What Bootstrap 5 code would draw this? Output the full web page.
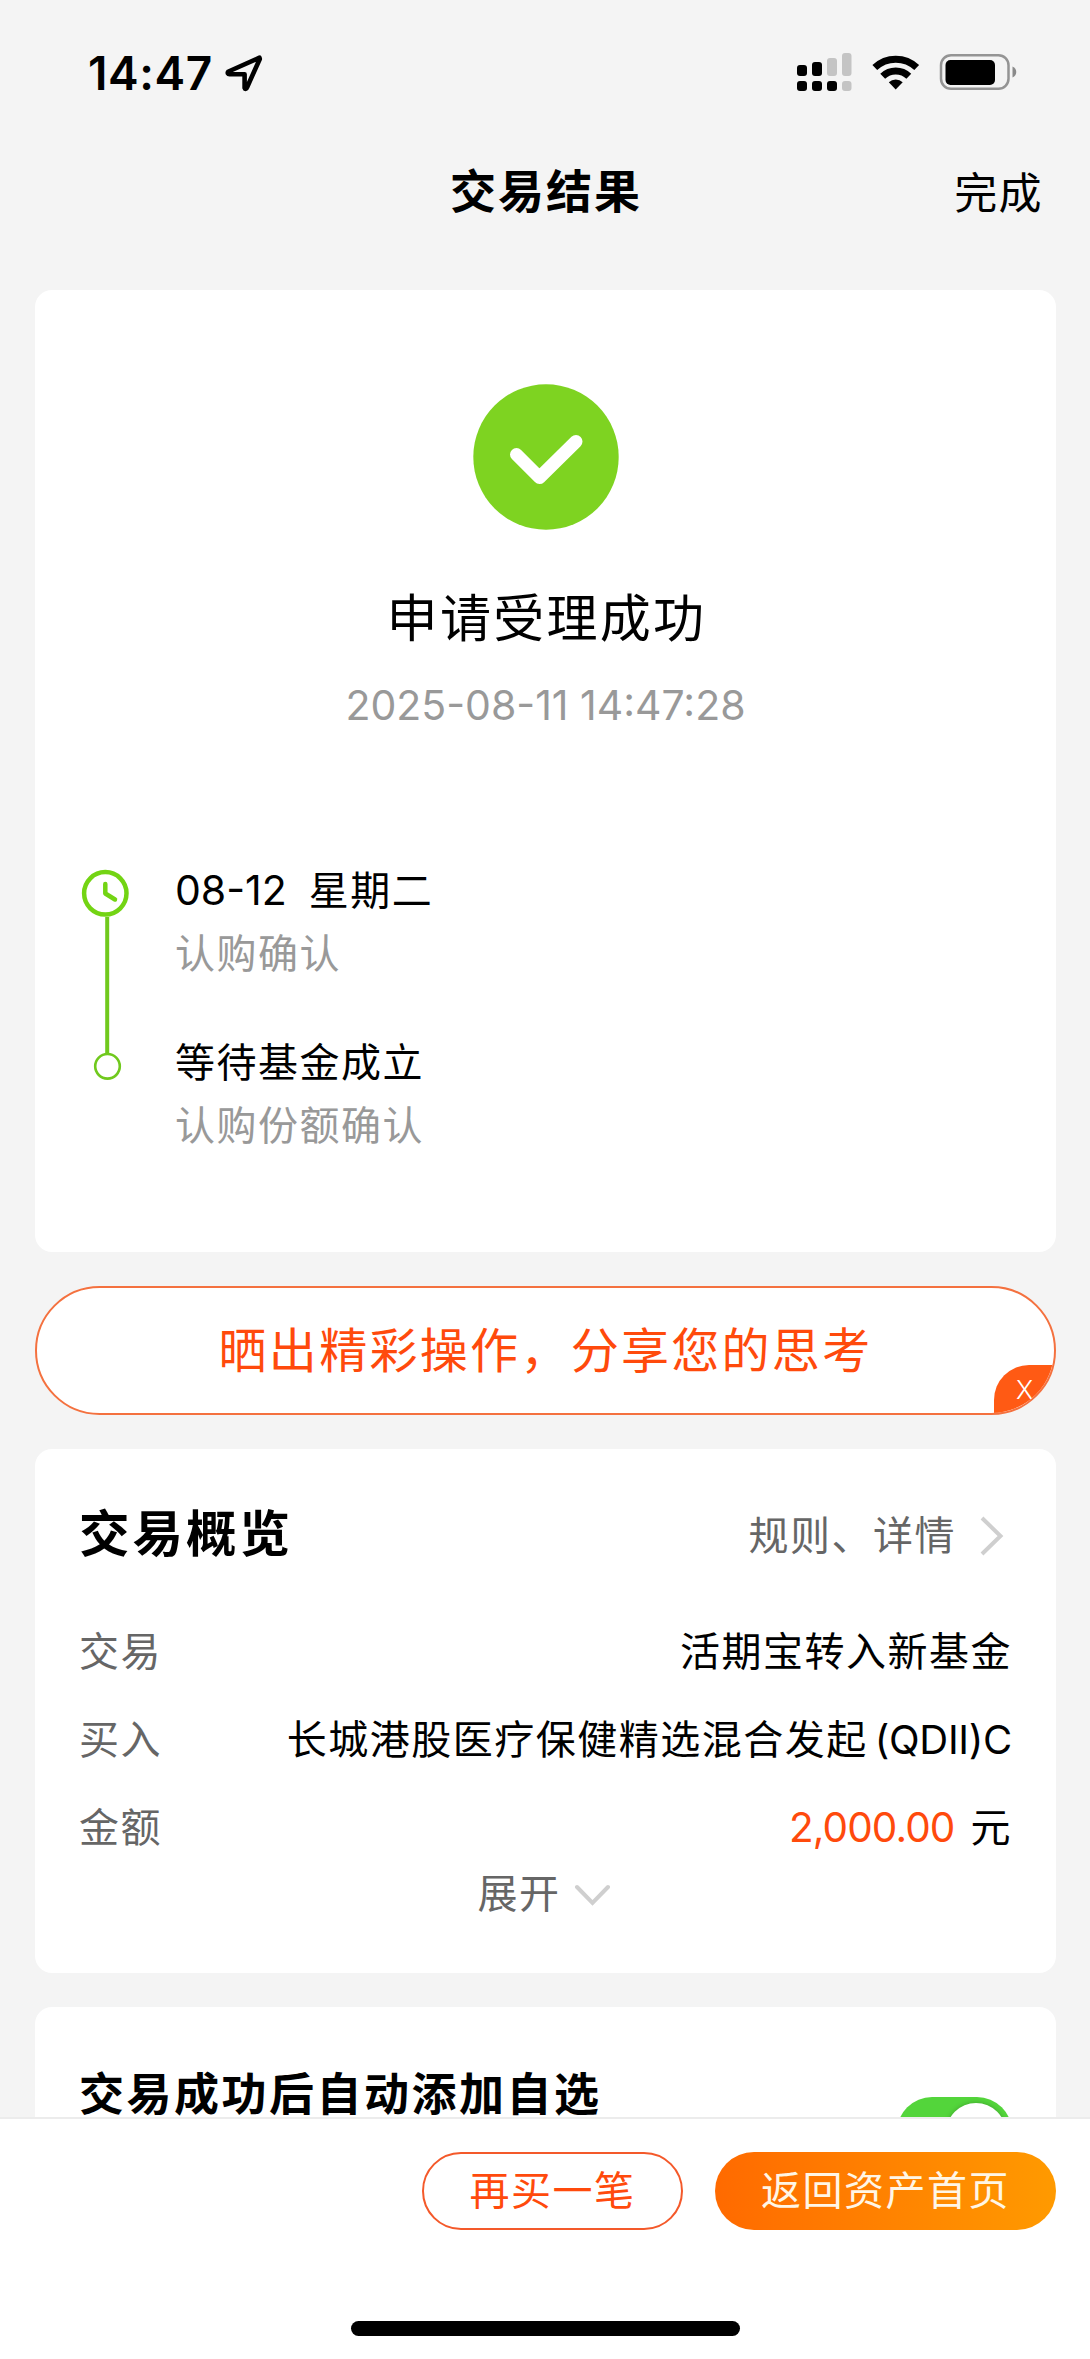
<!DOCTYPE html>
<html lang="zh-CN">
<head>
<meta charset="utf-8">
<meta name="viewport" content="width=device-width, initial-scale=1">
<title>交易结果</title>
<link href="https://cdn.jsdelivr.net/npm/bootstrap@5.3.0/dist/css/bootstrap.min.css" rel="stylesheet">
<style>
  body { font-family: Inter, "Noto Sans CJK SC", sans-serif; background: #f4f4f4; color: #000; height: 2359px; }
  .t40 { font-size: 40px; line-height: 50px; letter-spacing: 1.5px; white-space: nowrap; }
  .num { font-size: 41px; letter-spacing: 0; }
  .num-tight { font-size: 40.500px; letter-spacing: -.9px; }
  .num-fund { font-size: 40px; letter-spacing: -.3px; margin-left: 7px; }
  .weekday { margin-left: 22px; }
  .grey6 { color: #666; }
  .grey9 { color: #999; }
  .flame { color: #ff4a0c; }
  .statusbar { height: 145px; padding: 0 73px 0 88px; }
  .clock { font-size: 46px; line-height: 50px; font-weight: 600; letter-spacing: .6px; width: 123px; }
  .clock-arrow { margin-left: 14px; }
  .topnav { height: 91px; margin-bottom: 54px; padding-right: 47px; }
  .topnav h1 { font-size: 46px; line-height: 60px; font-weight: 600; letter-spacing: 2px; padding-left: 2px; }
  .done-link { font-size: 43px; line-height: 60px; letter-spacing: 1.4px; color: #000; padding-top: 4px; }
  .panel { margin: 0 34px 0 35px; border-radius: 17px; background: #fff; padding: 0 44px 0 44px; }
  .result { height: 962px; padding-top: 94px; }
  .result h2 { font-size: 51px; line-height: 60px; letter-spacing: 2.3px; font-weight: 400; margin: 59px 0 31px; padding-left: 2px; }
  .stamp { font-size: 41px; line-height: 50px; }
  .steps { margin-top: 135px; }
  .steps svg { margin-right: 43px; }
  .gap13 { margin-bottom: 13px; }
  .gap59 { margin-bottom: 59px; }
  .share { margin: 34px 34px 34px 35px; height: 129px; border: 2px solid #f4713f; background: #fff; font-size: 48px; letter-spacing: 2.300px; overflow: hidden; }
  .close-tag { right: -2px; bottom: -2px; width: 62px; height: 50px; border-radius: 35px 0 0 0; background: #ff5a14; color: #fff; font-size: 26px; font-weight: 300; line-height: 50px; padding-left: 22px; letter-spacing: 0; }
  .overview { height: 524px; padding-top: 55px; margin-bottom: 34px; }
  .overview h3 { font-size: 50.500px; line-height: 60px; letter-spacing: 3px; font-weight: 600; }
  .more-link { padding-top: 3px; }
  .rows { margin-top: 63px; gap: 38px; }
  .expand { margin-top: 16px; gap: 13px; padding-right: 4px; }
  .main-area { height: 2117px; overflow: hidden; }
  .auto-add { height: 200px; padding-top: 66px; }
  .auto-add h3 { font-size: 45px; line-height: 44px; letter-spacing: 2.500px; font-weight: 600; }
  .toggle { width: 115px; height: 70px; border-radius: 35px; background: #53d53b; margin-top: 24px; padding: 6px; }
  .knob { width: 60px; height: 60px; background: #fff; box-shadow: 0 0 5px rgba(0,0,0,.25); }
  .bottombar { height: 242px; border-top: 2px solid #ececec; padding: 33px 34px 0 0; background: #fff; }
  .pill { height: 78px; border: 0; padding: 0; }
  .pill-line { width: 261px; border: 2px solid #f4592a; color: #ff4a0c; background: #fff; }
  .pill-fill { width: 341px; background: linear-gradient(90deg, #ff6a00, #ff9a00); color: #fff6e6; }
  .home-bar { width: 389px; height: 15px; background: #000; margin: 91px 0 0 351px; }
</style>
</head>
<body class="overflow-hidden">
<div class="main-area">
  <header class="statusbar d-flex align-items-center justify-content-between">
    <div class="d-flex align-items-center">
      <span class="clock">14:47</span>
      <svg class="clock-arrow" width="38" height="38" viewBox="225 54 38 38" fill="none" stroke="#000" stroke-width="4.600" stroke-linejoin="round"><path d="M259.500 57.700 228.500 71.500C227 73 228 74.300 229.500 74.300H244.600V88C245 89.500 246.600 89 247 87.500L259.800 59Z"/></svg>
    </div>
    <svg width="221" height="40" viewBox="796 53 221 40">
      <g fill="#000">
        <rect x="797" y="65" width="10" height="11" rx="3"/><rect x="812" y="62" width="10" height="14" rx="3"/>
        <rect x="797" y="81" width="10" height="10" rx="3"/><rect x="812" y="81" width="10" height="10" rx="3"/><rect x="827" y="81" width="10" height="10" rx="3"/>
      </g>
      <g fill="#c4c4c4"><rect x="827" y="58" width="10" height="18" rx="3"/><rect x="842" y="53" width="9.500" height="23" rx="3"/><rect x="842" y="81" width="9.500" height="10" rx="3"/></g>
      <g fill="none" stroke="#000" stroke-width="7"><path d="M874.800 67.500A30.500 30.500 0 0 1 916.700 67.500"/><path d="M882.700 76.200A18.800 18.800 0 0 1 908.800 76.200"/></g>
      <path d="M888.800 82.300A10 10 0 0 1 902.700 82.300L895.700 89.500Z"/>
      <rect x="941" y="55.300" width="67.500" height="33.500" rx="10" fill="none" stroke="#949494" stroke-width="2.500"/>
      <rect x="945.500" y="60" width="49.500" height="25" rx="5"/>
      <path d="M1012.500 66.500C1017.500 68.500 1017.500 75.500 1012.500 77.500Z" fill="#8a8a8a"/>
    </svg>
  </header>
  <nav class="topnav position-relative d-flex align-items-center justify-content-end">
    <h1 class="position-absolute start-0 end-0 text-center mb-0">交易结果</h1>
    <a class="done-link text-decoration-none position-relative" href="#">完成</a>
  </nav>

  <section class="panel result">
    <div class="text-center">
      <svg class="d-block mx-auto" width="146" height="146" viewBox="0 0 146 146"><circle cx="73" cy="73" r="72.700" fill="#7ed321"/><path d="M43.500 70.500 66.500 93.500 103 57.500" fill="none" stroke="#fff" stroke-width="13" stroke-linecap="round" stroke-linejoin="round"/></svg>
      <h2>申请受理成功</h2>
      <div class="stamp grey9">2025-08-11 14:47:28</div>
    </div>
    <div class="steps d-flex">
      <svg width="53" height="220" viewBox="79 865 53 220" fill="none" stroke-linecap="round" stroke-linejoin="round">
        <circle cx="105.300" cy="893.300" r="21.200" stroke="#73d413" stroke-width="4.500"/>
        <path d="M105.300 884V893.500L115 899.500" stroke="#73d413" stroke-width="4.500"/>
        <path d="M107.200 917V1053" stroke="#70c91d" stroke-width="4" stroke-linecap="butt"/>
        <circle cx="107.500" cy="1066.300" r="12.300" stroke="#70c91d" stroke-width="2.600"/>
      </svg>
      <div class="t40">
        <div class="gap13"><span class="num">08-12</span><span class="weekday">星期二</span></div>
        <div class="gap59 grey9">认购确认</div>
        <div class="gap13">等待基金成立</div>
        <div class="grey9">认购份额确认</div>
      </div>
    </div>
  </section>

  <div class="share flame rounded-pill position-relative d-flex align-items-center justify-content-center">
    <span>晒出精彩操作，分享您的思考</span>
    <span class="close-tag position-absolute">X</span>
  </div>

  <section class="panel overview">
    <div class="d-flex justify-content-between align-items-center">
      <h3 class="mb-0">交易概览</h3>
      <a class="more-link t40 grey6 text-decoration-none d-flex align-items-center" href="#">规则、详情
        <svg class="ms-4 me-2" width="24" height="40" viewBox="0 0 24 40" fill="none" stroke="#cfcfcf" stroke-width="4"><path d="M2 2 20.500 20 2 38"/></svg></a>
    </div>
    <div class="rows t40 d-flex flex-column">
      <div class="d-flex justify-content-between"><span class="grey6">交易</span><span>活期宝转入新基金</span></div>
      <div class="d-flex justify-content-between"><span class="grey6">买入</span><span>长城港股医疗保健精选混合发起<span class="num-fund">(QDII)C</span></span></div>
      <div class="d-flex justify-content-between"><span class="grey6">金额</span><span><span class="num-tight flame me-3">2,000.00</span>元</span></div>
    </div>
    <div class="expand t40 grey6 d-flex align-items-center justify-content-center">展开
      <svg width="36" height="24" viewBox="0 0 36 24" fill="none" stroke="#cfcfcf" stroke-width="4" stroke-linecap="round"><path d="M3 5 18.500 21 34 5"/></svg></div>
  </section>

  <section class="panel auto-add d-flex justify-content-between align-items-start">
    <h3 class="mb-0">交易成功后自动添加自选</h3>
    <div class="toggle d-flex justify-content-end"><span class="knob rounded-circle"></span></div>
  </section>
</div>

<footer class="bottombar">
  <div class="d-flex justify-content-end gap-4">
    <button class="btn pill pill-line rounded-pill t40">再买一笔</button>
    <button class="btn pill pill-fill rounded-pill t40 ms-2">返回资产首页</button>
  </div>
  <div class="home-bar rounded-pill"></div>
</footer>
<script src="https://cdn.jsdelivr.net/npm/bootstrap@5.3.0/dist/js/bootstrap.bundle.min.js"></script>
</body>
</html>
